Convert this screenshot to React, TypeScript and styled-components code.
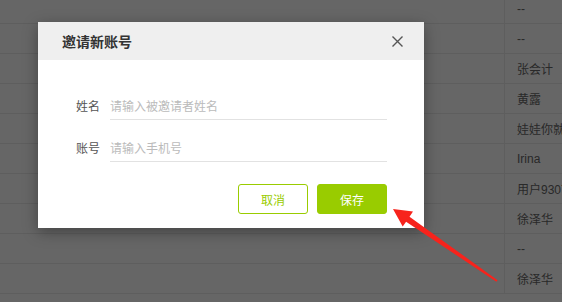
import React from "react";
import styled, { createGlobalStyle } from "styled-components";

const GlobalStyle = createGlobalStyle`
  html, body {
    margin: 0;
    padding: 0;
    width: 562px;
    height: 302px;
    overflow: hidden;
    background: #fff;
    font-family: "Liberation Sans", "Noto Sans CJK SC", sans-serif;
  }
  * {
    box-sizing: border-box;
  }
`;

const Page = styled.div`
  position: relative;
  width: 562px;
  height: 302px;
  overflow: hidden;
`;

const Table = styled.div`
  margin-top: -6px;
  display: flex;
  flex-direction: column;
`;

const Row = styled.div`
  display: grid;
  grid-template-columns: 504px 1fr;
  height: 30px;
  border-bottom: 1px solid #ebebeb;
`;

const Cell = styled.div`
  display: flex;
  align-items: center;
  padding-left: 12px;
  font-size: 12px;
  color: #666;
  white-space: nowrap;
  overflow: hidden;
  & + & {
    border-left: 1px solid #ebebeb;
  }
`;

const Mask = styled.div`
  position: absolute;
  inset: 0;
  background: rgba(0, 0, 0, 0.6);
`;

const Dialog = styled.div`
  position: absolute;
  left: 38px;
  top: 22px;
  width: 386px;
  background: #fff;
  box-shadow: 0 4px 14px rgba(0, 0, 0, 0.35);
`;

const DialogHeader = styled.div`
  height: 38px;
  background: #efefef;
  display: flex;
  align-items: center;
  justify-content: space-between;
  padding: 0 21px 0 24px;
`;

const Title = styled.div`
  font-family: "Noto Sans CJK SC", sans-serif;
  font-size: 14px;
  font-weight: 600;
  color: #333;
`;

const Close = styled.button`
  width: 12px;
  height: 12px;
  padding: 0;
  border: 0;
  background: none;
  display: flex;
  align-items: center;
  justify-content: center;
  cursor: pointer;
`;

const Body = styled.div`
  padding: 31px 37px 14px 38px;
  display: flex;
  flex-direction: column;
`;

const Field = styled.label`
  display: flex;
  align-items: center;
  gap: 10px;
  & + & {
    margin-top: 13px;
  }
`;

const Label = styled.span`
  width: 24px;
  font-family: "Noto Sans CJK SC", sans-serif;
  font-size: 12px;
  color: #555;
  white-space: nowrap;
`;

const Input = styled.input`
  flex: 1;
  height: 29px;
  border: 0;
  border-bottom: 1px solid #e2e2e2;
  padding: 0;
  outline: none;
  font-family: "Noto Sans CJK SC", sans-serif;
  font-size: 12px;
  color: #333;
  &::placeholder {
    color: #bbb;
  }
`;

const Actions = styled.div`
  display: flex;
  justify-content: flex-end;
  gap: 9px;
  margin-top: 22px;
`;

const Button = styled.button<{ $primary?: boolean }>`
  width: 70px;
  height: 30px;
  border-radius: 3px;
  border: 1px solid #99cc00;
  background: ${(p) => (p.$primary ? "#99cc00" : "#fff")};
  color: ${(p) => (p.$primary ? "#fff" : "#99cc00")};
  font-family: "Noto Sans CJK SC", sans-serif;
  font-size: 12px;
  cursor: pointer;
`;

const Arrow = styled.svg`
  position: absolute;
  left: 0;
  top: 0;
  pointer-events: none;
`;

const names = [
  "--",
  "--",
  "张会计",
  "黄露",
  "娃娃你就",
  "Irina",
  "用户9307",
  "徐泽华",
  "--",
  "徐泽华",
];

export default function App() {
  return (
    <Page>
      <GlobalStyle />
      <Table>
        {names.map((n, i) => (
          <Row key={i}>
            <Cell />
            <Cell>{n}</Cell>
          </Row>
        ))}
      </Table>
      <Mask />
      <Dialog>
        <DialogHeader>
          <Title>邀请新账号</Title>
          <Close aria-label="close">
            <svg width="11" height="11" viewBox="0 0 11 11">
              <path d="M0.5 0.5L10.5 10.5M10.5 0.5L0.5 10.5" stroke="#555" strokeWidth="1.4" />
            </svg>
          </Close>
        </DialogHeader>
        <Body>
          <Field>
            <Label>姓名</Label>
            <Input placeholder="请输入被邀请者姓名" />
          </Field>
          <Field>
            <Label>账号</Label>
            <Input placeholder="请输入手机号" />
          </Field>
          <Actions>
            <Button>取消</Button>
            <Button $primary>保存</Button>
          </Actions>
        </Body>
      </Dialog>
      <Arrow width="562" height="302" viewBox="0 0 562 302">
        <polygon
          points="393,209 413,211.5 409.5,216.7 497.6,280.2 496.4,281.8 406.1,221.7 402.7,226.6"
          fill="#f7231c"
        />
      </Arrow>
    </Page>
  );
}
